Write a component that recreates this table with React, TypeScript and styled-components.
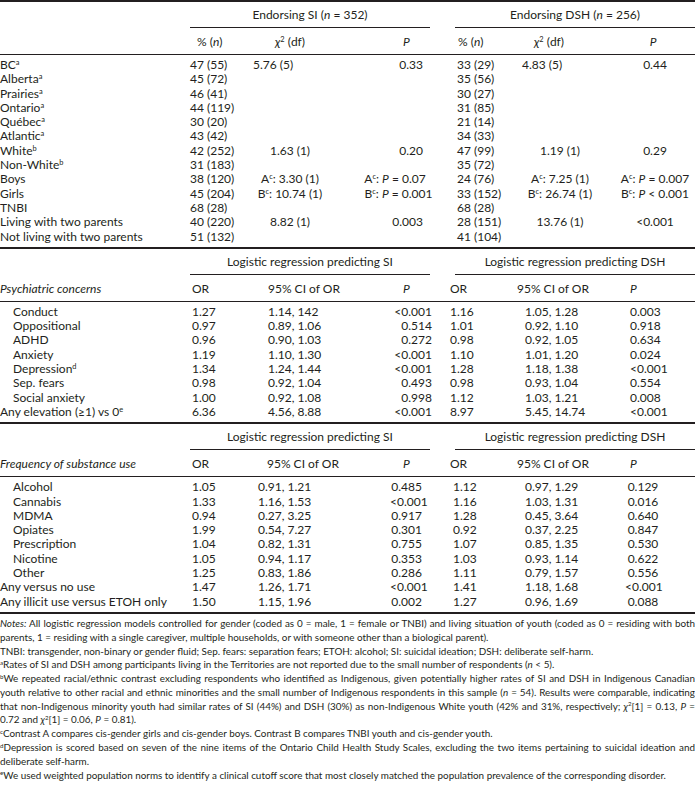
import React from "react";
import styled, { createGlobalStyle } from "styled-components";

const GlobalStyle = createGlobalStyle`
  html, body {
    margin: 0;
    padding: 0;
    background: #ffffff;
  }
`;

type Align = "left" | "center" | "right";
type CellSpec = string | React.ReactNode | { v: React.ReactNode; a?: Align; pl?: number; pr?: number };
type ColSpec = { a: Align; pl?: number; pr?: number };

const INK = "#231f20";

const Page = styled.div`
  width: 695px;
  font-family: Lato, "Open Sans", "Liberation Sans", sans-serif;
  color: ${INK};
  font-size: 12px;
`;

const Table = styled.div`
  border-top: 2px solid ${INK};
`;

const Block = styled.section`
  border-bottom: 2px solid ${INK};
`;

const Row = styled.div<{ $cols: string }>`
  display: grid;
  grid-template-columns: ${({ $cols }) => $cols};
  line-height: 14.3px;
`;

const GroupRow = styled(Row)`
  padding-top: 6px;
  line-height: 14px;
`;

const GroupCell = styled.div<{ $from: number; $to: number; $ml?: number; $mr?: number }>`
  grid-column: ${({ $from, $to }) => `${$from} / ${$to}`};
  margin-left: ${({ $ml }) => $ml ?? 0}px;
  margin-right: ${({ $mr }) => $mr ?? 0}px;
  text-align: center;
  padding-bottom: 5px;
  border-bottom: 1px solid ${INK};
  white-space: nowrap;
`;

const HeadRow = styled(Row)`
  padding: 7px 0 5px;
  line-height: 14px;
  border-bottom: 1px solid ${INK};
`;

const Body = styled.div`
  padding: 3px 0 3px;
`;

const Cell = styled.div<{ $a: Align; $pl?: number; $pr?: number }>`
  text-align: ${({ $a }) => $a};
  padding-left: ${({ $pl }) => $pl ?? 0}px;
  padding-right: ${({ $pr }) => $pr ?? 0}px;
  white-space: nowrap;
`;

const Label = styled.div<{ $indent?: boolean }>`
  padding-left: ${({ $indent }) => ($indent ? 13 : 0)}px;
  white-space: nowrap;
`;

const Sup = styled.sup`
  font-size: 0.62em;
  line-height: 0;
  vertical-align: 0;
  position: relative;
  top: -0.55em;
`;

const Ital = styled.i`
  font-style: italic;
`;

const Notes = styled.div`
  padding-top: 3px;
  font-size: 9.9px;
  line-height: 13.8px;
`;

const NoteLine = styled.div<{ $full?: boolean }>`
  white-space: nowrap;
  text-align: ${({ $full }) => ($full ? "justify" : "left")};
  text-align-last: ${({ $full }) => ($full ? "justify" : "left")};
`;

const Chi = () => (
  <>
    <Ital>χ</Ital>
    <Sup>2</Sup>
  </>
);

const Tag = ({ l, children }: { l: string; children: React.ReactNode }) => (
  <>
    {l}
    <Sup>c</Sup>: {children}
  </>
);

function renderCell(spec: CellSpec, col: ColSpec, key: number) {
  if (spec && typeof spec === "object" && "v" in (spec as object)) {
    const s = spec as { v: React.ReactNode; a?: Align; pl?: number; pr?: number };
    return (
      <Cell key={key} $a={s.a ?? col.a} $pl={s.pl ?? col.pl} $pr={s.pr ?? col.pr}>
        {s.v}
      </Cell>
    );
  }
  return (
    <Cell key={key} $a={col.a} $pl={col.pl} $pr={col.pr}>
      {spec as React.ReactNode}
    </Cell>
  );
}

type DataRow = { label: React.ReactNode; indent?: boolean; cells: CellSpec[] };

function Section({
  cols,
  groups,
  head,
  headCols,
  colSpecs,
  rows,
}: {
  cols: string;
  groups: { text: React.ReactNode; from: number; to: number; ml?: number; mr?: number }[];
  head: CellSpec[];
  headCols: ColSpec[];
  colSpecs: ColSpec[];
  rows: DataRow[];
}) {
  return (
    <Block>
      <GroupRow $cols={cols}>
        {groups.map((g, i) => (
          <GroupCell key={i} $from={g.from} $to={g.to} $ml={g.ml} $mr={g.mr}>
            {g.text}
          </GroupCell>
        ))}
      </GroupRow>
      <HeadRow $cols={cols}>{head.map((h, i) => renderCell(h, headCols[i], i))}</HeadRow>
      <Body>
        {rows.map((r, i) => (
          <Row key={i} $cols={cols}>
            <Label $indent={r.indent}>{r.label}</Label>
            {r.cells.map((c, j) => renderCell(c, colSpecs[j], j))}
          </Row>
        ))}
      </Body>
    </Block>
  );
}

const sup = (text: string, s: string) => (
  <>
    {text}
    <Sup>{s}</Sup>
  </>
);

// block 1: endorsing SI / DSH
const cols1 = "190px 60px 80px 125px 60px 90px 90px";
const head1Cols: ColSpec[] = [
  { a: "left" },
  { a: "left", pl: 7 },
  { a: "center" },
  { a: "left", pl: 73 },
  { a: "left", pl: 3 },
  { a: "center", pr: 22 },
  { a: "center", pl: 6 },
];
const data1Cols: ColSpec[] = [
  { a: "left" },
  { a: "center" },
  { a: "right", pr: 32 },
  { a: "left", pl: 2 },
  { a: "center" },
  { a: "center", pl: 10 },
];

const rows1: DataRow[] = [
  { label: sup("BC", "a"), cells: ["47 (55)", { v: "5.76 (5)", a: "left", pl: 3 }, "0.33", "33 (29)", { v: "4.83 (5)", a: "left", pl: 7 }, "0.44"] },
  { label: sup("Alberta", "a"), cells: ["45 (72)", "", "", "35 (56)", "", ""] },
  { label: sup("Prairies", "a"), cells: ["46 (41)", "", "", "30 (27)", "", ""] },
  { label: sup("Ontario", "a"), cells: ["44 (119)", "", "", "31 (85)", "", ""] },
  { label: sup("Québec", "a"), cells: ["30 (20)", "", "", "21 (14)", "", ""] },
  { label: sup("Atlantic", "a"), cells: ["43 (42)", "", "", "34 (33)", "", ""] },
  { label: sup("White", "b"), cells: ["42 (252)", "1.63 (1)", "0.20", "47 (99)", "1.19 (1)", "0.29"] },
  { label: sup("Non-White", "b"), cells: ["31 (183)", "", "", "35 (72)", "", ""] },
  {
    label: "Boys",
    cells: [
      "38 (120)",
      <Tag l="A">3.30 (1)</Tag>,
      { v: <Tag l="A"><Ital>P</Ital> = 0.07</Tag>, a: "center", pr: 0, pl: 5 },
      "24 (76)",
      <Tag l="A">7.25 (1)</Tag>,
      <Tag l="A"><Ital>P</Ital> = 0.007</Tag>,
    ],
  },
  {
    label: "Girls",
    cells: [
      "45 (204)",
      <Tag l="B">10.74 (1)</Tag>,
      { v: <Tag l="B"><Ital>P</Ital> = 0.001</Tag>, a: "center", pr: 0, pl: 12 },
      "33 (152)",
      <Tag l="B">26.74 (1)</Tag>,
      <Tag l="B"><Ital>P</Ital> &lt; 0.001</Tag>,
    ],
  },
  { label: "TNBI", cells: ["68 (28)", "", "", "68 (28)", "", ""] },
  { label: "Living with two parents", cells: ["40 (220)", "8.82 (1)", "0.003", "28 (151)", "13.76 (1)", "<0.001"] },
  { label: "Not living with two parents", cells: ["51 (132)", "", "", "41 (104)", "", ""] },
];

// block 2: psychiatric concerns
const cols2 = "190px 75px 125px 55px 70px 110px 70px";
const head2Cols: ColSpec[] = [
  { a: "left" },
  { a: "left", pl: 2 },
  { a: "left", pl: 3 },
  { a: "left", pl: 13 },
  { a: "left", pl: 5 },
  { a: "left", pl: 2 },
  { a: "left", pl: 5 },
];
const data2Cols: ColSpec[] = [
  { a: "left", pl: 2 },
  { a: "left", pl: 3 },
  { a: "right", pr: 13 },
  { a: "left", pl: 5 },
  { a: "left", pl: 10 },
  { a: "left", pl: 5 },
];

const rows2: DataRow[] = [
  { label: "Conduct", indent: true, cells: ["1.27", "1.14, 142", "<0.001", "1.16", "1.05, 1.28", "0.003"] },
  { label: "Oppositional", indent: true, cells: ["0.97", "0.89, 1.06", "0.514", "1.01", "0.92, 1.10", "0.918"] },
  { label: "ADHD", indent: true, cells: ["0.96", "0.90, 1.03", "0.272", "0.98", "0.92, 1.05", "0.634"] },
  { label: "Anxiety", indent: true, cells: ["1.19", "1.10, 1.30", "<0.001", "1.10", "1.01, 1.20", "0.024"] },
  { label: sup("Depression", "d"), indent: true, cells: ["1.34", "1.24, 1.44", "<0.001", "1.28", "1.18, 1.38", "<0.001"] },
  { label: "Sep. fears", indent: true, cells: ["0.98", "0.92, 1.04", "0.493", "0.98", "0.93, 1.04", "0.554"] },
  { label: "Social anxiety", indent: true, cells: ["1.00", "0.92, 1.08", "0.998", "1.12", "1.03, 1.21", "0.008"] },
  { label: sup("Any elevation (≥1) vs 0", "e"), cells: ["6.36", "4.56, 8.88", "<0.001", "8.97", "5.45, 14.74", "<0.001"] },
];

// block 3: substance use
const cols3 = "190px 65px 135px 55px 70px 110px 70px";
const head3Cols: ColSpec[] = [
  { a: "left" },
  { a: "left", pl: 2 },
  { a: "left", pl: 12 },
  { a: "left", pl: 13 },
  { a: "left", pl: 5 },
  { a: "left", pl: 2 },
  { a: "left", pl: 5 },
];
const data3Cols: ColSpec[] = [
  { a: "left", pl: 2 },
  { a: "left", pl: 3 },
  { a: "right", pr: 23 },
  { a: "left", pl: 8 },
  { a: "left", pl: 10 },
  { a: "center", pr: 34 },
];

const rows3: DataRow[] = [
  { label: "Alcohol", indent: true, cells: ["1.05", "0.91, 1.21", "0.485", "1.12", "0.97, 1.29", "0.129"] },
  { label: "Cannabis", indent: true, cells: ["1.33", "1.16, 1.53", "<0.001", "1.16", "1.03, 1.31", "0.016"] },
  { label: "MDMA", indent: true, cells: ["0.94", "0.27, 3.25", "0.917", "1.28", "0.45, 3.64", "0.640"] },
  { label: "Opiates", indent: true, cells: ["1.99", "0.54, 7.27", "0.301", "0.92", "0.37, 2.25", "0.847"] },
  { label: "Prescription", indent: true, cells: ["1.04", "0.82, 1.31", "0.755", "1.07", "0.85, 1.35", "0.530"] },
  { label: "Nicotine", indent: true, cells: ["1.05", "0.94, 1.17", "0.353", "1.03", "0.93, 1.14", "0.622"] },
  { label: "Other", indent: true, cells: ["1.25", "0.83, 1.86", "0.286", "1.11", "0.79, 1.57", "0.556"] },
  { label: "Any versus no use", cells: ["1.47", "1.26, 1.71", "<0.001", "1.41", "1.18, 1.68", "<0.001"] },
  { label: "Any illicit use versus ETOH only", cells: ["1.50", "1.15, 1.96", "0.002", "1.27", "0.96, 1.69", "0.088"] },
];

const orHead = (lead: React.ReactNode) => [
  lead,
  "OR",
  "95% CI of OR",
  <Ital>P</Ital>,
  "OR",
  "95% CI of OR",
  <Ital>P</Ital>,
];

export default function App() {
  return (
    <Page>
      <GlobalStyle />
      <Table>
        <Section
          cols={cols1}
          groups={[
            { text: <>Endorsing SI (<Ital>n</Ital> = 352)</>, from: 2, to: 5, mr: 25 },
            { text: <>Endorsing DSH (<Ital>n</Ital> = 256)</>, from: 5, to: 8 },
          ]}
          head={[
            "",
            <>% (<Ital>n</Ital>)</>,
            <><Chi /> (df)</>,
            <Ital>P</Ital>,
            <>% (<Ital>n</Ital>)</>,
            <><Chi /> (df)</>,
            <Ital>P</Ital>,
          ]}
          headCols={head1Cols}
          colSpecs={data1Cols}
          rows={rows1}
        />
        <Section
          cols={cols2}
          groups={[
            { text: "Logistic regression predicting SI", from: 2, to: 5, mr: 15 },
            { text: "Logistic regression predicting DSH", from: 5, to: 8, ml: 10 },
          ]}
          head={orHead(<Ital>Psychiatric concerns</Ital>)}
          headCols={head2Cols}
          colSpecs={data2Cols}
          rows={rows2}
        />
        <Section
          cols={cols3}
          groups={[
            { text: "Logistic regression predicting SI", from: 2, to: 5, mr: 15 },
            { text: "Logistic regression predicting DSH", from: 5, to: 8, ml: 10 },
          ]}
          head={orHead(<Ital>Frequency of substance use</Ital>)}
          headCols={head3Cols}
          colSpecs={data3Cols}
          rows={rows3}
        />
      </Table>
      <Notes>
        <NoteLine $full>
          <Ital>Notes:</Ital> All logistic regression models controlled for gender (coded as 0 = male, 1 = female or TNBI) and living situation of youth (coded as 0 = residing with both
        </NoteLine>
        <NoteLine>parents, 1 = residing with a single caregiver, multiple households, or with someone other than a biological parent).</NoteLine>
        <NoteLine>TNBI: transgender, non-binary or gender fluid; Sep. fears: separation fears; ETOH: alcohol; SI: suicidal ideation; DSH: deliberate self-harm.</NoteLine>
        <NoteLine>
          <Sup>a</Sup>Rates of SI and DSH among participants living in the Territories are not reported due to the small number of respondents (<Ital>n</Ital> &lt; 5).
        </NoteLine>
        <NoteLine $full>
          <Sup>b</Sup>We repeated racial/ethnic contrast excluding respondents who identified as Indigenous, given potentially higher rates of SI and DSH in Indigenous Canadian
        </NoteLine>
        <NoteLine $full>
          youth relative to other racial and ethnic minorities and the small number of Indigenous respondents in this sample (<Ital>n</Ital> = 54). Results were comparable, indicating
        </NoteLine>
        <NoteLine $full>
          that non-Indigenous minority youth had similar rates of SI (44%) and DSH (30%) as non-Indigenous White youth (42% and 31%, respectively; <Chi />[1] = 0.13, <Ital>P</Ital> =
        </NoteLine>
        <NoteLine>
          0.72 and <Chi />[1] = 0.06, <Ital>P</Ital> = 0.81).
        </NoteLine>
        <NoteLine>
          <Sup>c</Sup>Contrast A compares cis-gender girls and cis-gender boys. Contrast B compares TNBI youth and cis-gender youth.
        </NoteLine>
        <NoteLine $full>
          <Sup>d</Sup>Depression is scored based on seven of the nine items of the Ontario Child Health Study Scales, excluding the two items pertaining to suicidal ideation and
        </NoteLine>
        <NoteLine>deliberate self-harm.</NoteLine>
        <NoteLine>
          <Sup>e</Sup>We used weighted population norms to identify a clinical cutoff score that most closely matched the population prevalence of the corresponding disorder.
        </NoteLine>
      </Notes>
    </Page>
  );
}
